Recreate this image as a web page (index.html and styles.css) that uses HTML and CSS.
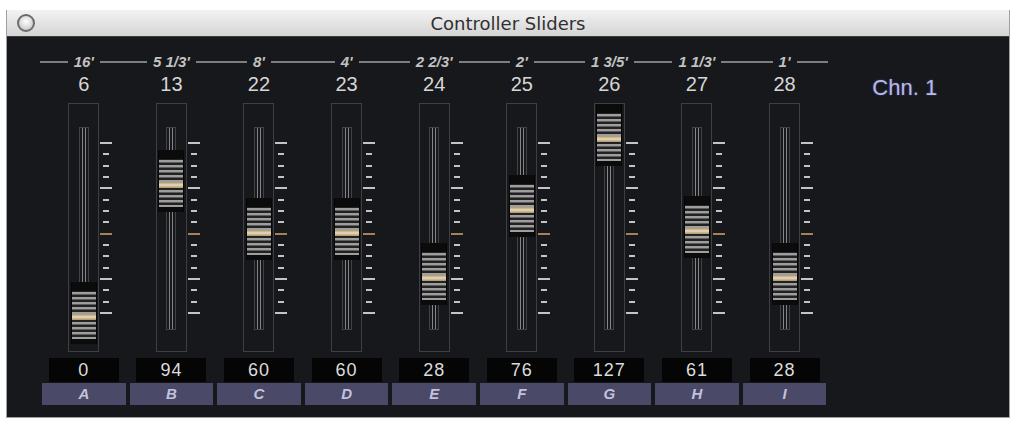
FILE: index.html
```html
<!DOCTYPE html>
<html lang="en">
<head>
  <meta charset="UTF-8">
  <title>Controller Sliders</title>
  <link rel="stylesheet" href="styles.css">
</head>
<body>

  <div class="window">
    <div class="titlebar">
      <span class="close"></span>
      <span class="title">Controller Sliders</span>
    </div>

    <div class="panel">
      <div class="bank">

        <div class="strip">
          <div class="foot"><span>16'</span></div>
          <div class="cc">6</div>
          <div class="slider">
            <div class="frame"><div class="track"><div class="groove"></div></div><div class="knob" style="top:178px"></div></div>
            <div class="ticks"><i class="long"></i><i></i><i></i><i></i><i class="long"></i><i></i><i></i><i></i><i class="long mid"></i><i></i><i></i><i></i><i class="long"></i><i></i><i></i><i class="long"></i></div>
          </div>
          <div class="val">0</div>
          <div class="key">A</div>
        </div>

        <div class="strip">
          <div class="foot"><span>5 1/3'</span></div>
          <div class="cc">13</div>
          <div class="slider">
            <div class="frame"><div class="track"><div class="groove"></div></div><div class="knob" style="top:46px"></div></div>
            <div class="ticks"><i class="long"></i><i></i><i></i><i></i><i class="long"></i><i></i><i></i><i></i><i class="long mid"></i><i></i><i></i><i></i><i class="long"></i><i></i><i></i><i class="long"></i></div>
          </div>
          <div class="val">94</div>
          <div class="key">B</div>
        </div>

        <div class="strip">
          <div class="foot"><span>8'</span></div>
          <div class="cc">22</div>
          <div class="slider">
            <div class="frame"><div class="track"><div class="groove"></div></div><div class="knob" style="top:94px"></div></div>
            <div class="ticks"><i class="long"></i><i></i><i></i><i></i><i class="long"></i><i></i><i></i><i></i><i class="long mid"></i><i></i><i></i><i></i><i class="long"></i><i></i><i></i><i class="long"></i></div>
          </div>
          <div class="val">60</div>
          <div class="key">C</div>
        </div>

        <div class="strip">
          <div class="foot"><span>4'</span></div>
          <div class="cc">23</div>
          <div class="slider">
            <div class="frame"><div class="track"><div class="groove"></div></div><div class="knob" style="top:94px"></div></div>
            <div class="ticks"><i class="long"></i><i></i><i></i><i></i><i class="long"></i><i></i><i></i><i></i><i class="long mid"></i><i></i><i></i><i></i><i class="long"></i><i></i><i></i><i class="long"></i></div>
          </div>
          <div class="val">60</div>
          <div class="key">D</div>
        </div>

        <div class="strip">
          <div class="foot"><span>2 2/3'</span></div>
          <div class="cc">24</div>
          <div class="slider">
            <div class="frame"><div class="track"><div class="groove"></div></div><div class="knob" style="top:139px"></div></div>
            <div class="ticks"><i class="long"></i><i></i><i></i><i></i><i class="long"></i><i></i><i></i><i></i><i class="long mid"></i><i></i><i></i><i></i><i class="long"></i><i></i><i></i><i class="long"></i></div>
          </div>
          <div class="val">28</div>
          <div class="key">E</div>
        </div>

        <div class="strip">
          <div class="foot"><span>2'</span></div>
          <div class="cc">25</div>
          <div class="slider">
            <div class="frame"><div class="track"><div class="groove"></div></div><div class="knob" style="top:71px"></div></div>
            <div class="ticks"><i class="long"></i><i></i><i></i><i></i><i class="long"></i><i></i><i></i><i></i><i class="long mid"></i><i></i><i></i><i></i><i class="long"></i><i></i><i></i><i class="long"></i></div>
          </div>
          <div class="val">76</div>
          <div class="key">F</div>
        </div>

        <div class="strip">
          <div class="foot"><span>1 3/5'</span></div>
          <div class="cc">26</div>
          <div class="slider">
            <div class="frame"><div class="track"><div class="groove"></div></div><div class="knob" style="top:0px"></div></div>
            <div class="ticks"><i class="long"></i><i></i><i></i><i></i><i class="long"></i><i></i><i></i><i></i><i class="long mid"></i><i></i><i></i><i></i><i class="long"></i><i></i><i></i><i class="long"></i></div>
          </div>
          <div class="val">127</div>
          <div class="key">G</div>
        </div>

        <div class="strip">
          <div class="foot"><span>1 1/3'</span></div>
          <div class="cc">27</div>
          <div class="slider">
            <div class="frame"><div class="track"><div class="groove"></div></div><div class="knob" style="top:92px"></div></div>
            <div class="ticks"><i class="long"></i><i></i><i></i><i></i><i class="long"></i><i></i><i></i><i></i><i class="long mid"></i><i></i><i></i><i></i><i class="long"></i><i></i><i></i><i class="long"></i></div>
          </div>
          <div class="val">61</div>
          <div class="key">H</div>
        </div>

        <div class="strip">
          <div class="foot"><span>1'</span></div>
          <div class="cc">28</div>
          <div class="slider">
            <div class="frame"><div class="track"><div class="groove"></div></div><div class="knob" style="top:139px"></div></div>
            <div class="ticks"><i class="long"></i><i></i><i></i><i></i><i class="long"></i><i></i><i></i><i></i><i class="long mid"></i><i></i><i></i><i></i><i class="long"></i><i></i><i></i><i class="long"></i></div>
          </div>
          <div class="val">28</div>
          <div class="key">I</div>
        </div>

      </div>

      <div class="channel">Chn. 1</div>
    </div>
  </div>

</body>
</html>
```

FILE: styles.css
```css
* { box-sizing: border-box; }
body { margin: 0; background: #fff; font-family: "Liberation Sans", Arial, sans-serif; }

.window { width: 1004px; height: 408px; margin: 10px 0 0 6px; border: 1px solid #a0a0a0; border-top: none; background: #16181b; display: flex; flex-direction: column; }

.titlebar { height: 27px; flex: none; display: grid; grid-template-columns: 1fr auto 1fr; align-items: center; background: linear-gradient(#f3f3f3, #d4d4d4); border-bottom: 1px solid #3c3c3c; }
.close { width: 18px; height: 18px; margin-left: 10px; border-radius: 50%; border: 2px solid #6c6c6c; background: radial-gradient(circle at 50% 40%, #ffffff, #d0d0d0 70%, #a8a8a8); }
.title { font-family: "DejaVu Sans", sans-serif; font-size: 18px; color: #303030; }

.panel { flex: 1; display: flex; align-items: flex-start; padding: 18px 0 0 33px; }
.bank { display: flex; }

.strip { width: 87.6px; display: flex; flex-direction: column; align-items: center; }

.foot { width: 100%; height: 14px; display: flex; align-items: center; }
.foot::before, .foot::after { content: ""; flex: 1; height: 2px; background: #7e7e7e; }
.foot span { margin: 0 6px; font-size: 15px; font-weight: bold; font-style: italic; color: #c2c2c2; line-height: 14px; }

.cc { margin-top: 5px; height: 20px; line-height: 20px; font-size: 20px; color: #d6d6d6; }

.slider { width: 100%; margin-top: 9px; display: grid; grid-template-columns: 1fr 31px 1fr; }
.frame { grid-column: 2; position: relative; height: 249px; border: 1px solid #3d3f43; padding-top: 23px; }
.track { width: 10px; height: 203px; margin: 0 auto; border: 1px solid #424242; display: flex; justify-content: center; }
.groove { width: 4px; border-left: 1px solid #858585; border-right: 1px solid #858585; }

.knob { position: absolute; left: 50%; width: 26px; height: 62px; margin-left: -13px; border-left: 1px solid #050505; border-right: 1px solid #050505;
  background:
    linear-gradient(to bottom, transparent 32px, #a8916c 32px, #eadcba 35px, #a8916c 38px, transparent 38px),
    linear-gradient(to bottom, #0b0b0b 0 9px, transparent 9px 57px, #0b0b0b 57px),
    repeating-linear-gradient(to bottom, #9e9e9e 0 2px, #5c5c5c 2px 3px, #222 3px 5px); }

.ticks { margin-left: 1px; width: 12px; padding-top: 39px; display: flex; flex-direction: column; align-items: center; gap: 9.33px; }
.ticks i { display: block; width: 6px; height: 2px; background: #c4c4c4; }
.ticks i.long { width: 12px; }
.ticks i.mid { background: #a9805a; }

.val { width: 70px; height: 24px; margin-top: 6px; background: #050505; color: #dcdcdc; font-size: 18px; line-height: 24px; letter-spacing: 1px; text-align: center; }
.key { width: calc(100% - 4px); height: 22px; margin-top: 1px; background: #4a4967; color: #c2c2dc; font-size: 15px; font-weight: bold; font-style: italic; line-height: 22px; text-align: center; }

.channel { margin: 21px 0 0 44px; font-size: 22px; line-height: 24px; color: #b8b8e4; text-shadow: 0 0 2px #4c4c90; }
```
